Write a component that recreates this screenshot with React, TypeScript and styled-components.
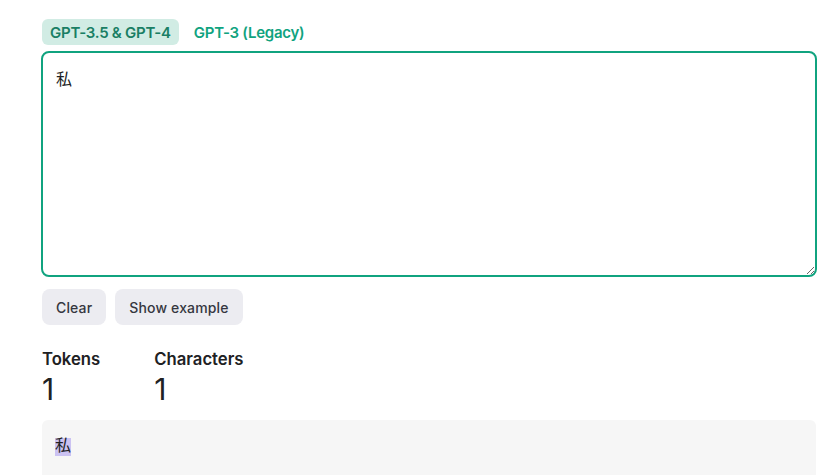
import React, { useState } from 'react';
import styled, { createGlobalStyle } from 'styled-components';

const GlobalStyle = createGlobalStyle`
  html, body {
    margin: 0;
    padding: 0;
    background: #ffffff;
    font-family: Inter, "Noto Sans", "Noto Sans CJK JP", sans-serif;
    color: #202123;
    overflow: hidden;
  }
`;

const Root = styled.div`
  display: flex;
  flex-direction: column;
  width: 774px;
  padding: 19px 0 0 42px;
`;

const Tabs = styled.div`
  display: flex;
  gap: 7px;
  margin-bottom: 6px;
`;

interface TabProps {
  active?: boolean;
}

const Tab = styled.button<TabProps>`
  border: none;
  height: 26px;
  padding: 0 8px;
  border-radius: 6px;
  font-family: Inter, sans-serif;
  font-size: 15px;
  font-weight: 600;
  letter-spacing: -0.25px;
  cursor: pointer;
  background: ${(p) => (p.active ? '#d1ece4' : 'transparent')};
  color: ${(p) => (p.active ? '#1a7f64' : '#10a37f')};
`;

const Input = styled.textarea`
  box-sizing: border-box;
  width: 776px;
  height: 226px;
  margin-left: -1px;
  padding: 17px 13px;
  border: 2px solid #10a37f;
  border-radius: 8px;
  outline: none;
  resize: vertical;
  font-family: "Liberation Mono", "Noto Sans CJK JP", monospace;
  font-size: 16px;
  line-height: 22px;
  color: #202123;
`;

const Actions = styled.div`
  display: flex;
  gap: 9px;
  margin-top: 12px;
`;

const Button = styled.button`
  border: none;
  height: 36px;
  padding: 0 14px;
  border-radius: 8px;
  background: #ececf1;
  color: #353740;
  font-family: Inter, sans-serif;
  font-size: 14px;
  font-weight: 500;
  letter-spacing: 0.15px;
  cursor: pointer;
`;

const Stats = styled.div`
  display: flex;
  gap: 54px;
  margin-top: 23px;
`;

const Stat = styled.div`
  display: flex;
  flex-direction: column;
`;

const StatLabel = styled.span`
  font-size: 16.7px;
  font-weight: 600;
  line-height: 22px;
  color: #202123;
`;

const StatValue = styled.span`
  font-size: 30px;
  font-weight: 400;
  line-height: 38px;
  color: #202123;
`;

const Output = styled.div`
  box-sizing: border-box;
  width: 774px;
  height: 55px;
  margin-top: 12px;
  padding: 16px 13px;
  background: #f6f6f6;
  border-radius: 6px 6px 0 0;
  font-family: "Liberation Mono", "Noto Sans CJK JP", monospace;
  font-size: 16px;
  line-height: 22px;
`;

const Token = styled.span`
  background: #cbc2f2;
`;

export default function App() {
  const [text, setText] = useState('私');
  const chars = Array.from(text).length;

  return (
    <>
      <GlobalStyle />
      <Root>
        <Tabs>
          <Tab active>GPT-3.5 &amp; GPT-4</Tab>
          <Tab>GPT-3 (Legacy)</Tab>
        </Tabs>
        <Input value={text} onChange={(e) => setText(e.target.value)} />
        <Actions>
          <Button onClick={() => setText('')}>Clear</Button>
          <Button>Show example</Button>
        </Actions>
        <Stats>
          <Stat>
            <StatLabel>Tokens</StatLabel>
            <StatValue>{chars ? 1 : 0}</StatValue>
          </Stat>
          <Stat>
            <StatLabel>Characters</StatLabel>
            <StatValue>{chars}</StatValue>
          </Stat>
        </Stats>
        <Output>{text && <Token>{text}</Token>}</Output>
      </Root>
    </>
  );
}
